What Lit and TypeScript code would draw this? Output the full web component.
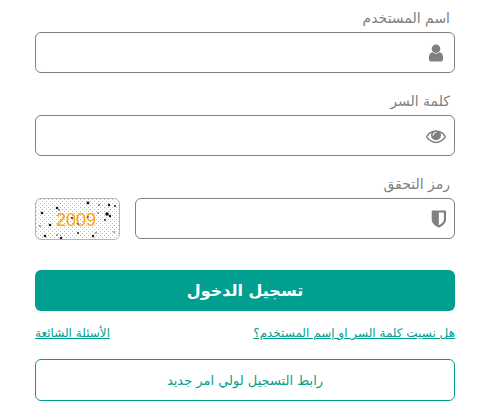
import { LitElement, html, svg, css } from "lit";
import { customElement } from "lit/decorators.js";

const USER =
  "M1280 137q0 -109 -62.5 -187t-150.5 -78h-854q-88 0 -150.5 78t-62.5 187q0 85 8.5 160.5t31.5 152t58.5 131t94 89t134.5 34.5q131 -128 313 -128t313 128q76 0 134.5 -34.5t94 -89t58.5 -131t31.5 -152t8.5 -160.5zM1024 1024q0 -159 -112.5 -271.5t-271.5 -112.5t-271.5 112.5t-112.5 271.5t112.5 271.5t271.5 112.5t271.5 -112.5t112.5 -271.5z";
const EYE =
  "M1664 576q-152 236 -381 353q61 -104 61 -225q0 -185 -131.5 -316.5t-316.5 -131.5t-316.5 131.5t-131.5 316.5q0 121 61 225q-229 -117 -381 -353q133 -205 333.5 -326.5t434.5 -121.5t434.5 121.5t333.5 326.5zM944 960q0 20 -14 34t-34 14q-125 0 -214.5 -89.5t-89.5 -214.5q0 -20 14 -34t34 -14t34 14t14 34q0 86 61 147t147 61q20 0 34 14t14 34zM1792 576q0 -34 -20 -69q-140 -230 -376.5 -368.5t-499.5 -138.5t-499.5 139t-376.5 368q-20 35 -20 69t20 69q140 229 376.5 368t499.5 139t499.5 -139t376.5 -368q20 -35 20 -69z";
const SHIELD =
  "M1088 576v640h-448v-1137q119 63 213 137q235 184 235 360zM1280 1344v-768q0 -86 -33.5 -170.5t-83 -150t-118 -127.5t-126.5 -103t-121 -77.5t-89.5 -49.5t-42.5 -20q-12 -6 -26 -6t-26 6q-16 7 -42.5 20t-89.5 49.5t-121 77.5t-126.5 103t-118 127.5t-83 150t-33.5 170.5v768q0 26 19 45t45 19h1152q26 0 45 -19t19 -45z";

// Noise specks on the captcha: x, y, radius
const SPECKS = [
  [52, 4, 1.4], [21, 9, 1.3], [23, 11, 0.8], [6, 14, 1.3], [63, 6, 0.8], [73, 6, 1.2], [79, 7, 1],
  [71, 15, 1.8], [74, 17, 1.2], [69, 21, 0.9], [62, 14, 0.7], [36, 19, 1], [14, 26, 1.3],
  [42, 25, 0.7], [52, 18, 0.7], [4, 27, 0.7], [9, 37, 1.3], [25, 39, 1.2], [21, 36, 0.7],
  [42, 34, 1], [57, 37, 1.2], [60, 34, 0.7], [78, 33, 0.7],
];

@customElement("app-root")
export class AppRoot extends LitElement {
  static styles = css`
    :host {
      display: block;
      background: #fff;
      color: #808080;
      font-family: "DejaVu Sans", "Noto Sans", sans-serif;
    }
    * {
      box-sizing: border-box;
    }
    form {
      display: flex;
      flex-direction: column;
      padding: 4px 38px 8px 35px;
    }
    label {
      display: block;
      padding-inline-start: 5px;
      font-size: 14px;
      line-height: 28px;
    }
    .field {
      margin-bottom: 14px;
    }
    .row {
      display: flex;
      gap: 15px;
    }
    .box {
      display: flex;
      align-items: center;
      height: 41px;
      padding: 0 8px;
      border: 1px solid #808080;
      border-radius: 6px;
    }
    .row .box {
      flex: 1;
    }
    .icon {
      flex: none;
      width: 20px;
      height: 20px;
      fill: #808080;
    }
    input {
      flex: 1;
      min-width: 0;
      height: 100%;
      border: 0;
      outline: 0;
      background: none;
      font: inherit;
    }
    .captcha {
      width: 85px;
      height: 42px;
      border: 1px solid #b4b4b4;
      border-radius: 6px;
    }
    .code {
      fill: #ffa500;
      font-family: "Liberation Sans", Arial, sans-serif;
      font-size: 18px;
    }
    button {
      width: 100%;
      height: 41px;
      border-radius: 6px;
      font-family: inherit;
    }
    .login {
      margin-top: 30px;
      border: 0;
      background: #009f8f;
      color: #fff;
      font-size: 16px;
      font-weight: 700;
    }
    .links {
      display: flex;
      justify-content: space-between;
      padding: 12px 0 16px;
      font-size: 12px;
      line-height: 20px;
    }
    a {
      color: #009f8f;
    }
    .register {
      height: 42px;
      border: 1px solid #009f8f;
      background: #fff;
      color: #009f8f;
      font-size: 13px;
    }
  `;

  private icon(path: string, x = 0) {
    return html`<svg class="icon" viewBox="${x} 0 1792 1792" aria-hidden="true">
      <path transform="translate(0 1536) scale(1 -1)" d=${path}></path>
    </svg>`;
  }

  render() {
    return html`
      <form dir="rtl" lang="ar" @submit=${(e: Event) => e.preventDefault()}>
        <label for="user">اسم المستخدم</label>
        <div class="field box">${this.icon(USER, -256)}<input id="user" type="text" /></div>
        <label for="pass">كلمة السر</label>
        <div class="field box">${this.icon(EYE)}<input id="pass" type="password" /></div>
        <label for="code">رمز التحقق</label>
        <div class="row">
          <div class="box">${this.icon(SHIELD, -512)}<input id="code" type="text" /></div>
          <svg class="captcha" viewBox="0 0 83 40" direction="ltr" role="img" aria-label="2009">
            <defs>
              <pattern id="dots" width="4" height="4" patternUnits="userSpaceOnUse">
                <rect width="1" height="1" fill="#bdbdbd" />
                <rect x="2" y="2" width="1" height="1" fill="#bdbdbd" />
              </pattern>
              <pattern id="tint" width="20" height="16" patternUnits="userSpaceOnUse">
                <rect x="4" y="4" width="1" height="1" fill="#c58ad8" />
                <rect x="14" y="10" width="1" height="1" fill="#c58ad8" />
              </pattern>
            </defs>
            <rect width="83" height="40" fill="url(#dots)" />
            <rect width="83" height="40" fill="url(#tint)" />
            <text class="code" x="40" y="27" text-anchor="middle">2009</text>
            ${SPECKS.map(([x, y, r]) => svg`<circle cx=${x} cy=${y} r=${r} fill="#111" />`)}
          </svg>
        </div>
        <button class="login" type="submit">تسجيل الدخول</button>
        <div class="links">
          <a href="#forgot">هل نسيت كلمة السر او إسم المستخدم؟</a>
          <a href="#faq">الأسئلة الشائعة</a>
        </div>
        <button class="register" type="button">رابط التسجيل لولي امر جديد</button>
      </form>
    `;
  }
}
